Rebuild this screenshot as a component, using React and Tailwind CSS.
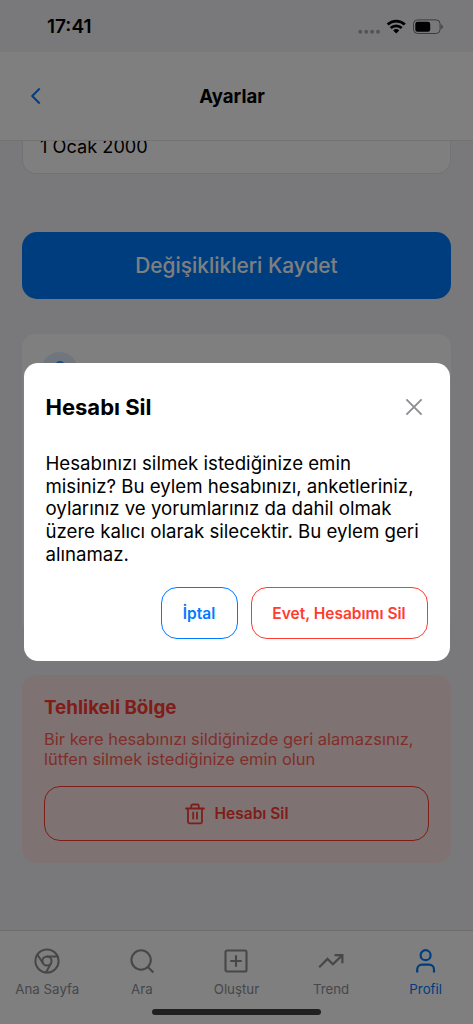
const S = ({ children, className, w = 2, vb = "0 0 26 26" }) => (
  <svg viewBox={vb} className={className} fill="none" stroke="currentColor" strokeWidth={w} strokeLinejoin="round" strokeLinecap="round">
    {children}
  </svg>
);

const tabs = [
  { label: "Ana Sayfa", w: 2, icon: (
    <>
      <circle cx="13" cy="13" r="11.6" />
      <circle cx="13" cy="13" r="4.6" />
      <path d="M13 8.4h10.4M9 15.3 3.5 6.7M17 15.3 12 24.5" />
    </>
  ) },
  { label: "Ara", w: 2.1, icon: (
    <>
      <circle cx="12.1" cy="12" r="9.7" />
      <path strokeLinecap="butt" d="m18.9 18.9 5.5 5.5" />
    </>
  ) },
  { label: "Oluştur", w: 2.1, icon: (
    <>
      <rect x="2.5" y="2.5" width="21" height="21" rx="1.6" />
      <path strokeLinecap="butt" d="M13 7.3v11.4M7.3 13h11.4" />
    </>
  ) },
  { label: "Trend", w: 2.2, icon: <path strokeLinejoin="miter" strokeLinecap="butt" d="m1.2 19.2 8.3-8.3 5.4 5.4 9.2-8.9M16.6 7.2h7.8v8" /> },
  { label: "Profil", w: 2.2, active: true, icon: (
    <>
      <circle cx="12.6" cy="7.2" r="5" />
      <path strokeLinecap="butt" d="M4.2 24.6v-3.2a4.8 4.8 0 0 1 4.8-4.8h7.2a4.8 4.8 0 0 1 4.8 4.8v3.2" />
    </>
  ) },
];

function StatusBar() {
  return (
    <div className="flex h-[52px] shrink-0 items-start justify-between pl-[47px] pr-[30px] pt-[15px]">
      <span className="text-[19px] font-semibold leading-6">17:41</span>
      <svg className="mt-px h-6 w-[86px]" viewBox="0 0 86 24">
        <g fill="#a9a9ad">
          <circle cx="3.3" cy="15.8" r="2" />
          <circle cx="9.2" cy="15.8" r="2" />
          <circle cx="15.1" cy="15.8" r="2" />
          <circle cx="21" cy="15.8" r="2" />
        </g>
        <g fill="none" stroke="#000" strokeWidth="2.7">
          <path d="M30.6 8.6a12.5 12.5 0 0 1 17.2 0" />
          <path d="M33.7 12a8 8 0 0 1 11 0" />
        </g>
        <path d="M36.2 14.4a4.5 4.5 0 0 1 6 0l-3 3.1z" />
        <rect x="56.5" y="3.9" width="26.6" height="13.6" rx="4" fill="none" stroke="#77777b" />
        <rect x="58.3" y="5.7" width="14.9" height="10" rx="2.3" />
        <path d="M84.3 8.4c2 .6 2 4 0 4.6z" fill="#77777b" />
      </svg>
    </div>
  );
}

function Modal() {
  return (
    <div className="absolute inset-0 bg-black/50 pl-[23.5px] pt-[363px]">
      <div className="h-[298px] w-[426px] rounded-[14px] bg-white px-[22px] pt-[29px]">
        <div className="flex h-[30px] items-center justify-between pr-[5px]">
          <h2 className="text-[22px] font-bold leading-7">Hesabı Sil</h2>
          <svg viewBox="0 0 18 18" className="size-[18px] text-[#8e8e93]" fill="none" stroke="currentColor" strokeWidth="1.9">
            <path d="m1.4 1.4 15.2 15.2M16.6 1.4 1.4 16.6" />
          </svg>
        </div>
        <p className="mt-[30px] whitespace-nowrap text-[18.65px] leading-[22.7px]">
          Hesabınızı silmek istediğinize emin<br />
          misiniz? Bu eylem hesabınızı, anketleriniz,<br />
          oylarınız ve yorumlarınız da dahil olmak<br />
          üzere kalıcı olarak silecektir. Bu eylem geri<br />
          alınamaz.
        </p>
        <div className="mt-[21px] flex justify-end gap-[13px] text-[15.5px] font-semibold">
          <button className="h-[52px] w-[77px] rounded-[16px] border border-[#007aff] pt-0.5 text-[#007aff]">İptal</button>
          <button className="h-[52px] w-[177px] rounded-[16px] border border-[#ff3b30] pt-0.5 text-[#ff3b30]">Evet, Hesabımı Sil</button>
        </div>
      </div>
    </div>
  );
}

export default function App() {
  return (
    <div className="relative flex h-[1024px] w-[473px] flex-col overflow-hidden bg-[#f2f2f7] font-['Inter',sans-serif] text-black">
      <StatusBar />
      <header className="flex h-[89px] shrink-0 items-center border-b border-[#e5e5ea] bg-white px-[30px]">
        <svg viewBox="0 0 12 18" className="h-[18px] w-3 text-[#007aff]" fill="none" stroke="currentColor" strokeWidth="2">
          <path d="M9.7 1.5 2.2 9l7.5 7.5" />
        </svg>
        <h1 className="flex-1 pr-[21px] pt-0.5 text-center text-[18.6px] font-bold">Ayarlar</h1>
      </header>
      <main className="flex min-h-0 flex-1 flex-col overflow-hidden px-[22px]">
        <div className="flex h-[33px] shrink-0 items-start overflow-hidden rounded-b-[14px] border border-t-0 border-[#e5e5ea] bg-white pl-[17px]">
          <span className="-mt-[7px] text-[18.2px] leading-6">1 Ocak 2000</span>
        </div>
        <button className="mt-[58px] h-[67px] shrink-0 rounded-[15px] bg-[#007aff] pt-px text-[20.9px] font-medium text-white">Değişiklikleri Kaydet</button>
        <div className="mt-[35px] h-[300px] shrink-0 rounded-[14px] bg-white px-[19px] pt-[18px]">
          <div className="flex size-[37px] justify-center rounded-full bg-[#e0edfd] pt-[9px]">
            <span className="size-2.5 rounded-full bg-[#3c96ff]" />
          </div>
        </div>
        <section className="mt-[41px] h-[188px] shrink-0 rounded-[14px] bg-[#ffe5e5] px-[22px] pt-[21px] text-[#ff3b30]">
          <h2 className="text-[18.8px] font-bold leading-6">Tehlikeli Bölge</h2>
          <p className="mt-[9px] whitespace-nowrap text-[16.5px] leading-5 opacity-80">
            Bir kere hesabınızı sildiğinizde geri alamazsınız,<br />lütfen silmek istediğinize emin olun
          </p>
          <button className="mt-[17px] flex h-[55px] w-full items-center justify-center gap-2.5 rounded-[16px] border border-[#ff3b30] text-[15.5px] font-semibold">
            <S className="h-[22px] w-5" vb="0 0 20 22" w={1.8}>
              <path d="M1 5.5h18M3 5.5v13.3c0 1 .6 1.5 1.5 1.5h11c.9 0 1.5-.6 1.5-1.5V5.5M6.2 5V3c0-.9.6-1.5 1.5-1.5h4.6c.9 0 1.5.6 1.5 1.5v2M8.2 9.5v6.2M12 9.5v6.2" />
            </S>
            <span className="pt-px">Hesabı Sil</span>
          </button>
        </section>
      </main>
      <nav className="flex h-[94px] shrink-0 border-t border-[#dcdce0] bg-white pt-[17px]">
        {tabs.map((t) => (
          <div key={t.label} className={t.active ? "flex flex-1 flex-col items-center text-[#007aff]" : "flex flex-1 flex-col items-center text-[#8e8e93]"}>
            <S className="size-[26px]" w={t.w}>{t.icon}</S>
            <span className="mt-[5px] text-[13.3px] leading-5">{t.label}</span>
          </div>
        ))}
      </nav>
      <Modal />
      <div className="absolute bottom-[9px] left-[152px] h-[6px] w-[169px] rounded-full bg-[#202020]" />
    </div>
  );
}
